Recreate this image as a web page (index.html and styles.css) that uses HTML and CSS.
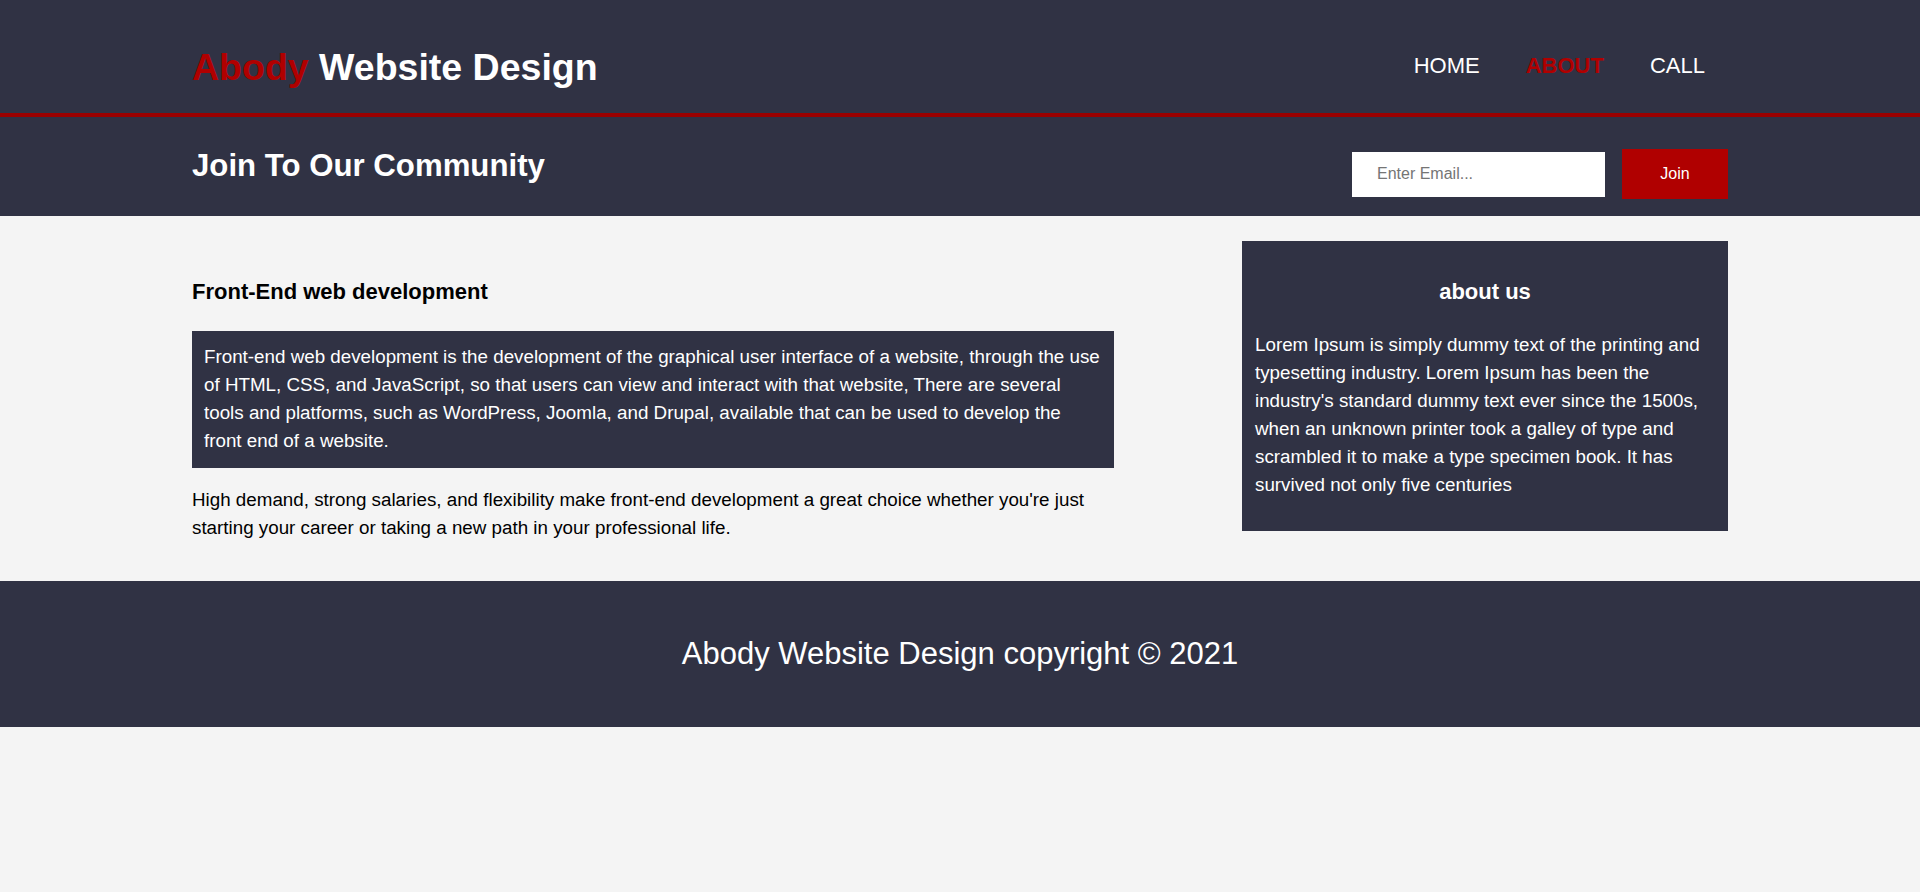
FILE: index.html
```html
<!DOCTYPE html>
<html lang="en">
<head>
<meta charset="utf-8">
<title>Abody Website Design</title>
<link rel="stylesheet" href="styles.css">
</head>
<body>
<header class="topbar">
  <div class="container topbar-inner">
    <h1 class="logo"><span class="logo-accent">Abody</span> Website Design</h1>
    <nav class="nav">
      <a class="nav-link" href="#">HOME</a>
      <a class="nav-link nav-link-active" href="#">ABOUT</a>
      <a class="nav-link" href="#">CALL</a>
    </nav>
  </div>
</header>
<section class="join">
  <div class="container join-inner">
    <h2 class="join-title">Join To Our Community</h2>
    <form class="join-form">
      <input class="join-input" type="email" placeholder="Enter Email...">
      <button class="join-button" type="button">Join</button>
    </form>
  </div>
</section>
<main class="content">
  <div class="container content-inner">
    <article class="main-col">
      <h3 class="section-title">Front-End web development</h3>
      <p class="dark-box">Front-end web development is the development of the graphical user interface of a website, through the use of HTML, CSS, and JavaScript, so that users can view and interact with that website, There are several tools and platforms, such as WordPress, Joomla, and Drupal, available that can be used to develop the front end of a website.</p>
      <p class="plain-text">High demand, strong salaries, and flexibility make front-end development a great choice whether you're just starting your career or taking a new path in your professional life.</p>
    </article>
    <aside class="about-box">
      <h3 class="about-title">about us</h3>
      <p class="about-text">Lorem Ipsum is simply dummy text of the printing and typesetting industry. Lorem Ipsum has been the industry's standard dummy text ever since the 1500s, when an unknown printer took a galley of type and scrambled it to make a type specimen book. It has survived not only five centuries</p>
    </aside>
  </div>
</main>
<footer class="footer">
  <p class="footer-text">Abody Website Design copyright &copy; 2021</p>
</footer>
</body>
</html>
```
FILE: styles.css
```css
* {
  box-sizing: border-box;
}

html, body {
  margin: 0;
  padding: 0;
}

body {
  background: #f4f4f4;
  font-family: "Liberation Sans", Arial, sans-serif;
  color: #000;
}

.container {
  width: 1536px;
  margin: 0 auto;
}

/* Header */
.topbar {
  background: #303244;
  height: 117px;
  border-bottom: 4px solid #9a0000;
}

.topbar-inner {
  display: flex;
  justify-content: space-between;
  align-items: flex-start;
}

.logo {
  margin: 0;
  padding-top: 44px;
  font-size: 37.5px;
  line-height: 46px;
  font-weight: bold;
  color: #fff;
}

.logo-accent {
  color: #b00000;
}

.nav {
  display: flex;
  padding-top: 53px;
}

.nav-link {
  padding: 0 23px;
  font-size: 22px;
  line-height: 26px;
  color: #fff;
  text-decoration: none;
}

.nav-link-active {
  color: #b00000;
  font-weight: bold;
}

/* Join band */
.join {
  background: #303244;
  height: 99px;
}

.join-inner {
  display: flex;
  justify-content: space-between;
  align-items: flex-start;
}

.join-title {
  margin: 31px 0 0;
  font-size: 31.2px;
  line-height: 36px;
  font-weight: bold;
  color: #fff;
}

.join-form {
  display: flex;
  align-items: center;
  gap: 17px;
  margin: 32px 0 0;
}

.join-input {
  width: 253px;
  height: 45px;
  border: 0;
  outline: none;
  padding: 0 0 0 25px;
  background: #fff;
  font-family: "Liberation Sans", Arial, sans-serif;
  font-size: 16px;
  color: #333;
}

.join-input::placeholder {
  color: #757575;
}

.join-button {
  width: 106px;
  height: 50px;
  border: 0;
  background: #b00000;
  color: #fff;
  font-family: "Liberation Sans", Arial, sans-serif;
  font-size: 16px;
  cursor: pointer;
}

/* Content */
.content {
  padding: 25px 0 40px;
}

.content-inner {
  display: flex;
  justify-content: space-between;
  align-items: flex-start;
}

.main-col {
  width: 922px;
}

.section-title {
  margin: 38px 0 26px;
  font-size: 22px;
  line-height: 26px;
  font-weight: bold;
}

.dark-box {
  margin: 0;
  padding: 12px 12px 13px;
  background: #303244;
  color: #fff;
  font-size: 18.8px;
  line-height: 28px;
}

.plain-text {
  margin: 18px 0 0;
  font-size: 18.8px;
  line-height: 27.5px;
}

.about-box {
  width: 486px;
  padding: 13px 13px 32px;
  background: #303244;
  color: #fff;
}

.about-title {
  margin: 25px 0 26px;
  text-align: center;
  font-size: 22px;
  line-height: 26px;
  font-weight: bold;
}

.about-text {
  margin: 0;
  font-size: 18.8px;
  line-height: 28px;
}

/* Footer */
.footer {
  background: #303244;
  height: 146px;
  padding-top: 55px;
}

.footer-text {
  margin: 0;
  text-align: center;
  font-size: 31px;
  line-height: 36px;
  color: #fff;
}
```
